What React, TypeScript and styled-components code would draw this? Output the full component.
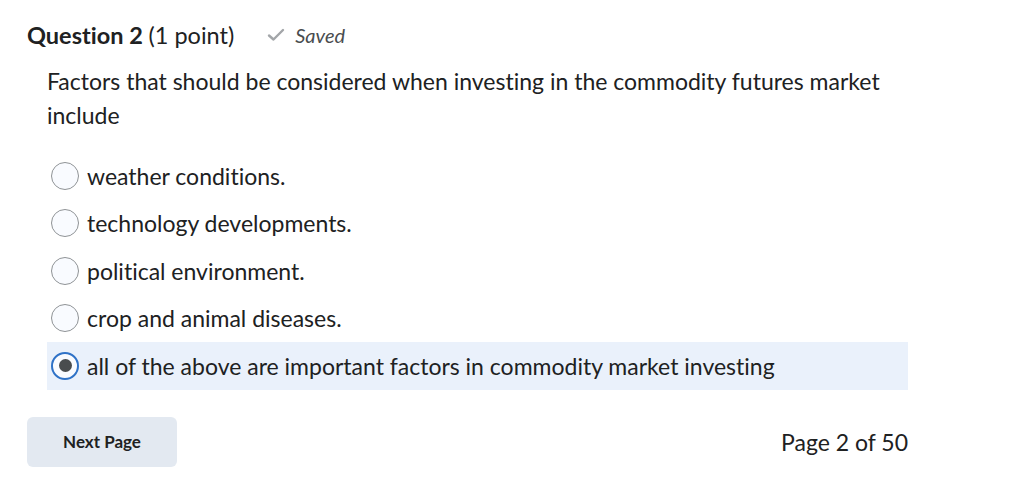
import { ReactElement, useState } from 'react'
import styled, { createGlobalStyle } from 'styled-components'

const GlobalStyle = createGlobalStyle`
  html, body {
    margin: 0;
    padding: 0;
    background: #ffffff;
    font-family: Lato, 'Noto Sans', sans-serif;
    font-variant-ligatures: none;
    color: #202122;
  }
`

const StyledPage = styled.div`
  width: 1024px;
  height: 491px;
  box-sizing: border-box;
  padding: 20px 116px 0 27px;
`

const StyledHeader = styled.div`
  display: flex;
  align-items: center;
  height: 30px;
`

const StyledTitle = styled.h2`
  margin: 0;
  font-size: 23.5px;
  font-weight: 700;
  color: #202122;

  & span {
    font-weight: 400;
  }
`

const StyledSaved = styled.div`
  display: flex;
  align-items: center;
  gap: 9px;
  margin-left: 32px;
  font-size: 20px;
  font-style: italic;
  color: #494c4e;
`

const StyledQuestion = styled.p`
  margin: 14px 0 0 20px;
  font-size: 23px;
  line-height: 34px;
  color: #202122;
`

const StyledOptions = styled.div`
  display: flex;
  flex-direction: column;
  margin: 20px 0 0 20px;
`

const StyledOption = styled.label<{ $selected: boolean }>`
  display: flex;
  align-items: center;
  gap: 8px;
  height: 47.5px;
  padding-left: 4px;
  box-sizing: border-box;
  font-size: 23px;
  color: #202122;
  background: ${(p) => (p.$selected ? '#eaf1fb' : 'transparent')};
  cursor: pointer;
`

const StyledRadio = styled.span<{ $selected: boolean }>`
  width: 28px;
  height: 28px;
  box-sizing: border-box;
  border-radius: 50%;
  flex-shrink: 0;
  display: flex;
  align-items: center;
  justify-content: center;
  background: #f9fbff;
  border: ${(p) => (p.$selected ? '2.5px solid #2f72c7' : '1px solid #8f9396')};

  &::after {
    content: '';
    display: ${(p) => (p.$selected ? 'block' : 'none')};
    width: 13px;
    height: 13px;
    border-radius: 50%;
    background: #494c4e;
  }
`

const StyledFooter = styled.div`
  display: flex;
  align-items: center;
  justify-content: space-between;
  margin-top: 27px;
`

const StyledButton = styled.button`
  width: 150px;
  height: 50px;
  border: none;
  border-radius: 6px;
  background: #e3e9f1;
  font-family: Lato, 'Noto Sans', sans-serif;
  font-size: 17px;
  font-weight: 700;
  color: #202122;
  cursor: pointer;
`

const StyledPageCount = styled.div`
  font-size: 23px;
  color: #202122;
`

const options = [
  'weather conditions.',
  'technology developments.',
  'political environment.',
  'crop and animal diseases.',
  'all of the above are important factors in commodity market investing',
]

const App = (): ReactElement => {
  const [selected, setSelected] = useState(4)

  return (
    <>
      <GlobalStyle />
      <StyledPage>
        <StyledHeader>
          <StyledTitle>
            Question 2 <span>(1 point)</span>
          </StyledTitle>
          <StyledSaved>
            <svg width="20" height="16" viewBox="0 0 20 16" fill="none">
              <path
                d="M3 8.5 L7.5 12.5 L17 3"
                stroke="#a3a6a9"
                strokeWidth="2.4"
                strokeLinecap="round"
                strokeLinejoin="round"
              />
            </svg>
            Saved
          </StyledSaved>
        </StyledHeader>
        <StyledQuestion>
          Factors that should be considered when investing in the commodity
          futures market include
        </StyledQuestion>
        <StyledOptions>
          {options.map((o, i) => (
            <StyledOption
              key={i}
              $selected={selected === i}
              onClick={(): void => setSelected(i)}
            >
              <StyledRadio $selected={selected === i} />
              {o}
            </StyledOption>
          ))}
        </StyledOptions>
        <StyledFooter>
          <StyledButton>Next Page</StyledButton>
          <StyledPageCount>Page 2 of 50</StyledPageCount>
        </StyledFooter>
      </StyledPage>
    </>
  )
}

export default App
